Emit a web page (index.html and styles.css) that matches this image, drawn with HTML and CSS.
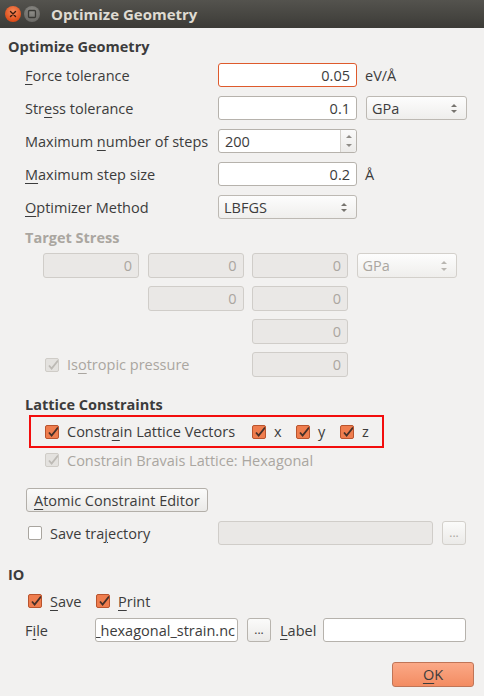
FILE: index.html
```html
<!DOCTYPE html>
<html lang="en">
<head>
    <meta charset="UTF-8">
    <meta name="viewport" content="width=device-width, initial-scale=1.0">
    <link rel="stylesheet" href="styles.css">
    <title>Optimize Geometry</title>
</head>
<body>

    <div class="titlebar">
        <span class="wbtn close">
            <svg width="16" height="16" viewBox="0 0 16 16"><path d="M5.5 5.5l5 5M10.5 5.5l-5 5" stroke="#3a1a0e" stroke-width="1.4" stroke-linecap="round"/></svg>
        </span>
        <span class="wbtn maxi">
            <svg width="16" height="16" viewBox="0 0 16 16"><rect x="4.5" y="4.5" width="7" height="7" rx="1" fill="none" stroke="#3a3935" stroke-width="1.3"/></svg>
        </span>
        <span class="title">Optimize Geometry</span>
    </div>

    <div class="content">
        <div class="group-title">Optimize Geometry</div>

        <div class="form">
            <div class="row">
                <span class="label"><u>F</u>orce tolerance</span>
                <span class="field num focus">0.05</span>
                <span class="unit">eV/Å</span>
            </div>
            <div class="row">
                <span class="label">Str<u>e</u>ss tolerance</span>
                <span class="field num">0.1</span>
                <span class="combo wide">GPa<span class="arrows"></span></span>
            </div>
            <div class="row">
                <span class="label">Maximum <u>n</u>umber of steps</span>
                <span class="field spin">200<span class="spin-btn"><i class="up"></i><i class="down"></i></span></span>
            </div>
            <div class="row">
                <span class="label"><u>M</u>aximum step size</span>
                <span class="field num">0.2</span>
                <span class="unit">Å</span>
            </div>
            <div class="row">
                <span class="label"><u>O</u>ptimizer Method</span>
                <span class="combo">LBFGS<span class="arrows"></span></span>
            </div>
        </div>

        <div class="sub-title muted">Target Stress</div>
        <div class="stress-grid">
            <span class="field num off">0</span>
            <span class="field num off">0</span>
            <span class="field num off">0</span>
            <span class="combo off">GPa<span class="arrows"></span></span>

            <span></span>
            <span class="field num off">0</span>
            <span class="field num off">0</span>
            <span></span>

            <span></span>
            <span></span>
            <span class="field num off">0</span>
            <span></span>

            <span class="check-item iso off"><span class="box checked"></span>Is<u>o</u>tropic pressure</span>
            <span class="field num off">0</span>
            <span></span>
        </div>

        <div class="sub-title lattice">Lattice Constraints</div>
        <div class="highlight">
            <span class="check-item first"><span class="box checked"></span>Constr<u>a</u>in Lattice Vectors</span>
            <span class="check-item axis"><span class="box checked"></span>x</span>
            <span class="check-item axis"><span class="box checked"></span>y</span>
            <span class="check-item"><span class="box checked"></span>z</span>
        </div>
        <div class="bravais">
            <span class="check-item off"><span class="box checked"></span>Constrain Bravais Lattice: Hexagonal</span>
        </div>

        <div class="btn-row">
            <span class="button"><u>A</u>tomic Constraint Editor</span>
        </div>

        <div class="traj-row">
            <span class="check-item traj"><span class="box"></span>Save tra<u>j</u>ectory</span>
            <span class="field off traj-path"></span>
            <span class="dots off">...</span>
        </div>

        <div class="group-title io">IO</div>
        <div class="io-checks">
            <span class="check-item save"><span class="box checked"></span><u>S</u>ave</span>
            <span class="check-item"><span class="box checked"></span><u>P</u>rint</span>
        </div>
        <div class="file-row">
            <span class="file-label">F<u>i</u>le</span>
            <span class="field file"><span class="file-text">_hexagonal_strain.nc</span></span>
            <span class="dots">...</span>
            <span class="label-text"><u>L</u>abel</span>
            <span class="field label-field"></span>
        </div>

        <div class="footer">
            <span class="ok"><u>O</u>K</span>
        </div>
    </div>

</body>
</html>
```

FILE: styles.css
```css
body {
    margin: 0;
    background-color: #f2f1f0;
    font-family: 'Open Sans', 'DejaVu Sans', sans-serif;
    font-size: 14.5px;
    color: #3c3c3c;
}
u {
    text-decoration: underline;
    text-underline-offset: 3px;
    text-decoration-thickness: 1px;
}

/* window title bar */
.titlebar {
    height: 28px;
    display: flex;
    align-items: center;
    padding-left: 5px;
    background: linear-gradient(#54534e, #3c3b37);
}
.wbtn {
    width: 16px;
    height: 16px;
    border-radius: 50%;
    margin-right: 3px;
    display: flex;
}
.wbtn.close {
    background: radial-gradient(circle at 50% 35%, #f58b5c, #de4a16 75%);
}
.wbtn.maxi {
    background: radial-gradient(circle at 50% 35%, #8e8d88, #6c6b67 75%);
}
.title {
    margin-left: 8px;
    color: #dfdbd2;
    font-weight: bold;
    font-size: 15px;
}

.content {
    padding: 0 10px 0 8px;
}
.group-title {
    padding-top: 9px;
    line-height: 20px;
    font-weight: bold;
}
.sub-title {
    margin-left: 17px;
    margin-top: 10px;
    line-height: 18px;
    font-weight: bold;
}
.sub-title.lattice {
    margin-top: 19px;
}
.muted {
    color: #aaa6a0;
}

/* inputs */
.field {
    box-sizing: border-box;
    height: 24px;
    width: 139px;
    border: 1px solid #b6b2ac;
    border-radius: 3px;
    background-color: #fff;
    padding: 0 6px;
    display: flex;
    align-items: center;
    position: relative;
}
.field.num {
    justify-content: flex-end;
}
.field.focus {
    border-color: #de5a2c;
}
.field.off {
    background-color: #eae8e6;
    border-color: #d0cdc9;
    color: #aaa6a0;
    height: 25px;
    width: 96px;
}
.spin-btn {
    position: absolute;
    right: 0;
    top: 0;
    bottom: 0;
    width: 15px;
    border-left: 1px solid #d4d1cc;
    background: linear-gradient(#fafafa, #ecebe9);
    border-radius: 0 3px 3px 0;
}
.spin-btn i, .arrows::before, .arrows::after {
    position: absolute;
    left: 50%;
    margin-left: -3px;
    border-left: 3px solid transparent;
    border-right: 3px solid transparent;
}
.spin-btn .up {
    top: 5px;
    border-bottom: 3px solid #8f8c87;
}
.spin-btn .down {
    bottom: 5px;
    border-top: 3px solid #8f8c87;
}
.combo {
    box-sizing: border-box;
    height: 24px;
    width: 139px;
    border: 1px solid #bdb9b3;
    border-radius: 3px;
    background: linear-gradient(#fdfdfd, #efeeec);
    padding: 0 5px;
    display: flex;
    align-items: center;
    position: relative;
}
.combo.wide {
    width: 101px;
}
.combo.off {
    width: 100px;
    height: 25px;
    color: #aaa6a0;
    border-color: #d3d0cb;
}
.arrows {
    position: absolute;
    right: 9px;
    top: 0;
    bottom: 0;
    width: 6px;
}
.arrows::before {
    content: "";
    top: 7px;
    border-bottom: 3px solid #77746f;
}
.arrows::after {
    content: "";
    bottom: 6px;
    border-top: 3px solid #77746f;
}
.off .arrows::before { border-bottom-color: #b9b6b1; }
.off .arrows::after { border-top-color: #b9b6b1; }

/* main form */
.form {
    margin-top: 6px;
    margin-left: 17px;
    display: flex;
    flex-direction: column;
    gap: 9px;
}
.row {
    display: flex;
    align-items: center;
    height: 24px;
}
.row .label {
    width: 193px;
}
.unit {
    margin-left: 8px;
}
.row .combo.wide {
    margin-left: 9px;
}

/* target stress */
.stress-grid {
    margin-top: 6px;
    margin-left: 35px;
    display: grid;
    grid-template-columns: 96px 96px 96px 100px;
    grid-auto-rows: 25px;
    column-gap: 8.5px;
    row-gap: 8px;
}
.check-item.iso {
    grid-column: 1 / span 2;
    padding-left: 2px;
}

/* checkboxes */
.check-item {
    display: flex;
    align-items: center;
}
.box {
    box-sizing: border-box;
    width: 14px;
    height: 14px;
    border: 1px solid #a9a59f;
    border-radius: 2px;
    background: #fff;
    margin-right: 8px;
    flex: none;
}
.box.checked {
    border-color: #b9542e;
    background-color: #ef7d4e;
    background-image: url("data:image/svg+xml,%3Csvg xmlns='http://www.w3.org/2000/svg' width='14' height='14' viewBox='0 0 14 14'%3E%3Cpath d='M3 6.5l2.6 3L12 1.5' fill='none' stroke='%23463029' stroke-width='1.8'/%3E%3C/svg%3E");
}
.off {
    color: #aaa6a0;
}
.off .box.checked {
    border-color: #cfccc7;
    background-color: #e4e2df;
    background-image: url("data:image/svg+xml,%3Csvg xmlns='http://www.w3.org/2000/svg' width='14' height='14' viewBox='0 0 14 14'%3E%3Cpath d='M3 6.5l2.6 3L12 1.5' fill='none' stroke='%23bdbab5' stroke-width='1.8'/%3E%3C/svg%3E");
}

/* lattice constraints */
.highlight {
    box-sizing: border-box;
    margin-top: 1px;
    margin-left: 21px;
    width: 355px;
    height: 33px;
    border: 2px solid #f30d0d;
    padding-left: 14px;
    display: flex;
    align-items: center;
}
.highlight .first {
    width: 207px;
}
.highlight .axis {
    width: 44px;
}
.bravais {
    margin-top: 2px;
    margin-left: 37px;
    height: 20px;
    display: flex;
    align-items: center;
}

.btn-row {
    margin-top: 18px;
    margin-left: 18px;
    display: flex;
}
.button {
    box-sizing: border-box;
    height: 24px;
    padding: 0 7px;
    border: 1px solid #b3afa9;
    border-radius: 3px;
    background: linear-gradient(#fbfbfa, #ebeae8);
    display: flex;
    align-items: center;
}

.traj-row {
    margin-top: 9px;
    margin-left: 20px;
    display: flex;
    align-items: center;
    height: 24px;
}
.traj {
    width: 190px;
}
.field.traj-path {
    width: 215px;
    height: 24px;
}
.dots {
    box-sizing: border-box;
    width: 24px;
    height: 24px;
    margin-left: 9px;
    border: 1px solid #b8b4ae;
    border-radius: 3px;
    background: linear-gradient(#fbfbfa, #ebeae8);
    display: flex;
    justify-content: center;
    align-items: center;
    font-size: 12px;
    line-height: 1;
}
.dots.off {
    border-color: #d3d0cb;
    color: #aaa6a0;
}

/* io */
.group-title.io {
    padding-top: 0;
    margin-top: 20px;
}
.io-checks {
    margin-top: 6px;
    margin-left: 20px;
    height: 20px;
    display: flex;
    align-items: center;
}
.io-checks .save {
    width: 68px;
}
.file-row {
    margin-top: 7px;
    margin-left: 17px;
    display: flex;
    align-items: center;
    height: 24px;
}
.file-label {
    width: 70px;
}
.field.file {
    width: 143px;
    padding: 0 2px;
    overflow: hidden;
    white-space: nowrap;
    justify-content: flex-end;
}
.file-text {
    flex: none;
}
.label-text {
    margin-left: 9px;
    width: 43px;
}
.field.label-field {
    width: 143px;
}

.footer {
    margin-top: 20px;
    display: flex;
    justify-content: flex-end;
}
.ok {
    box-sizing: border-box;
    width: 82px;
    height: 25px;
    border: 1px solid #c07557;
    border-radius: 3px;
    background: linear-gradient(#fba987, #f38c62);
    display: flex;
    justify-content: center;
    align-items: center;
}
```
